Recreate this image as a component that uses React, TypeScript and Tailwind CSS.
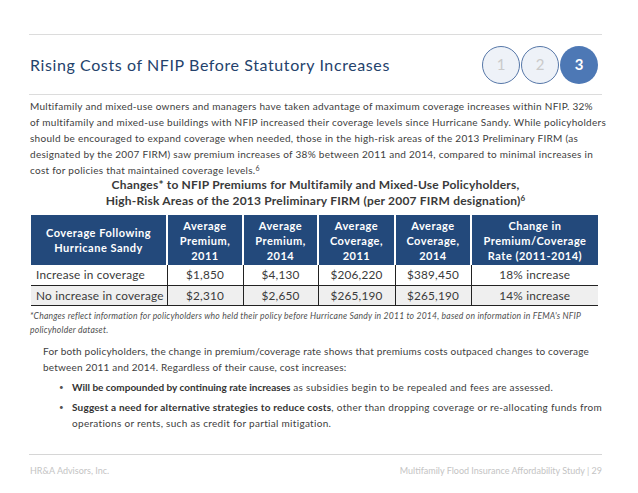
import React from 'react';

const font = { fontFamily: 'Lato, "Open Sans", sans-serif' };

const rows = [
  ['Increase in coverage', '$1,850', '$4,130', '$206,220', '$389,450', '18% increase'],
  ['No increase in coverage', '$2,310', '$2,650', '$265,190', '$265,190', '14% increase'],
];

const Circle = ({ n, active }: { n: string; active?: boolean }) =>
  active ? (
    <div className="w-[38px] h-[38px] rounded-full bg-[#4d78b5] flex items-center justify-center text-white font-bold text-[15px]">
      {n}
    </div>
  ) : (
    <div className="w-[38px] h-[38px] rounded-full bg-[#eef2f8] border-[1.5px] border-[#5677a8] flex items-center justify-center text-[#cacaca] text-[15px]">
      {n}
    </div>
  );

export default function App() {
  return (
    <div className="w-[638px] h-[493px] bg-white flex flex-col pl-[29px] pr-[36px] pt-[34px] pb-[16px]" style={font}>
      {/* Header */}
      <div className="h-[61px] border-t border-b border-[#dcdcdc] flex items-center justify-between">
        <h1 className="text-[16px] tracking-[0.6px] text-[#24426c] pl-[1px]">Rising Costs of NFIP Before Statutory Increases</h1>
        <div className="flex gap-[1px] pr-[4px]">
          <Circle n="1" />
          <Circle n="2" />
          <Circle n="3" active />
        </div>
      </div>

      <p className="mt-[3px] text-[10px] tracking-[0.28px] leading-[16px] text-[#404040] pl-[1px] whitespace-nowrap">
        Multifamily and mixed-use owners and managers have taken advantage of maximum coverage increases within NFIP. 32%
        <br />
        of multifamily and mixed-use buildings with NFIP increased their coverage levels since Hurricane Sandy. While policyholders
        <br />
        should be encouraged to expand coverage when needed, those in the high-risk areas of the 2013 Preliminary FIRM (as
        <br />
        designated by the 2007 FIRM) saw premium increases of 38% between 2011 and 2014, compared to minimal increases in
        <br />
        cost for policies that maintained coverage levels.<sup className="text-[7px]">6</sup>
      </p>

      <div className="text-center font-bold text-[12px] tracking-[0.2px] leading-[16px] text-[#3a3a3a] -mt-[1px]">
        Changes* to NFIP Premiums for Multifamily and Mixed-Use Policyholders,
        <br />
        High-Risk Areas of the 2013 Preliminary FIRM (per 2007 FIRM designation)<sup className="text-[8px]">6</sup>
      </div>

      <table className="mt-[6px] ml-[2px] w-[567px] border-collapse table-fixed">
        <colgroup>
          <col className="w-[136px]" />
          <col className="w-[76px]" />
          <col className="w-[75px]" />
          <col className="w-[77px]" />
          <col className="w-[76px]" />
          <col />
        </colgroup>
        <thead>
          <tr className="bg-[#23497b] text-white font-bold text-[11px] tracking-[0.5px] leading-[15px] h-[50px]">
            <th className="border-r-2 border-white px-1">Coverage Following<br />Hurricane Sandy</th>
            <th className="border-r-2 border-white px-1">Average<br />Premium,<br />2011</th>
            <th className="border-r-2 border-white px-1">Average<br />Premium,<br />2014</th>
            <th className="border-r-2 border-white px-1">Average<br />Coverage,<br />2011</th>
            <th className="border-r-2 border-white px-1">Average<br />Coverage,<br />2014</th>
            <th className="px-1">Change in<br />Premium/Coverage<br />Rate (2011-2014)</th>
          </tr>
        </thead>
        <tbody>
          {rows.map((r, i) => (
            <tr key={i} className={`h-[20px] leading-[17px] border-b border-[#222] text-[11.8px] tracking-[0.2px] text-[#3a3a3a] ${i === 1 ? 'bg-[#efefef]' : 'bg-white'}`}>
              {r.map((c, j) => (
                <td
                  key={j}
                  className={`${j === 0 ? 'text-left pl-[5px]' : 'text-center'} ${j < 5 ? 'border-r border-[#222]' : ''} py-0 whitespace-nowrap`}
                >
                  {c}
                </td>
              ))}
            </tr>
          ))}
        </tbody>
      </table>

      <p className="mt-[3px] text-[8.6px] tracking-[0.2px] leading-[14px] italic text-[#505050] pl-[1px] whitespace-nowrap">
        *Changes reflect information for policyholders who held their policy before Hurricane Sandy in 2011 to 2014, based on information in FEMA's NFIP
        <br />
        policyholder dataset.
      </p>

      <div className="pl-[14px] text-[10px] text-[#404040] mt-[6px]">
        <p className="leading-[16px] tracking-[0.2px] whitespace-nowrap">
          For both policyholders, the change in premium/coverage rate shows that premiums costs outpaced changes to coverage
          <br />
          between 2011 and 2014. Regardless of their cause, cost increases:
        </p>
        <ul className="mt-[4px] pl-[16px] flex flex-col gap-[4px] tracking-[0.3px]">
          <li className="flex leading-[16px]">
            <span className="w-[13px] shrink-0 text-[8px] text-[#555]">•</span>
            <span>
              <b className="text-[#333] tracking-normal">Will be compounded by continuing rate increases</b> as subsidies begin to be repealed and fees are assessed.
            </span>
          </li>
          <li className="flex leading-[16px]">
            <span className="w-[13px] shrink-0 text-[8px] text-[#555]">•</span>
            <span className="whitespace-nowrap">
              <b className="text-[#333] tracking-[0.2px]">Suggest a need for alternative strategies to reduce costs</b>, other than dropping coverage or re-allocating funds from
              <br />
              operations or rents, such as credit for partial mitigation.
            </span>
          </li>
        </ul>
      </div>

      <div className="mt-auto border-t border-[#d6d6d6] pt-[9px] flex justify-between text-[9px] text-[#c4c4c4] pl-[1px]">
        <span>HR&amp;A Advisors, Inc.</span>
        <span>Multifamily Flood Insurance Affordability Study | 29</span>
      </div>
    </div>
  );
}
